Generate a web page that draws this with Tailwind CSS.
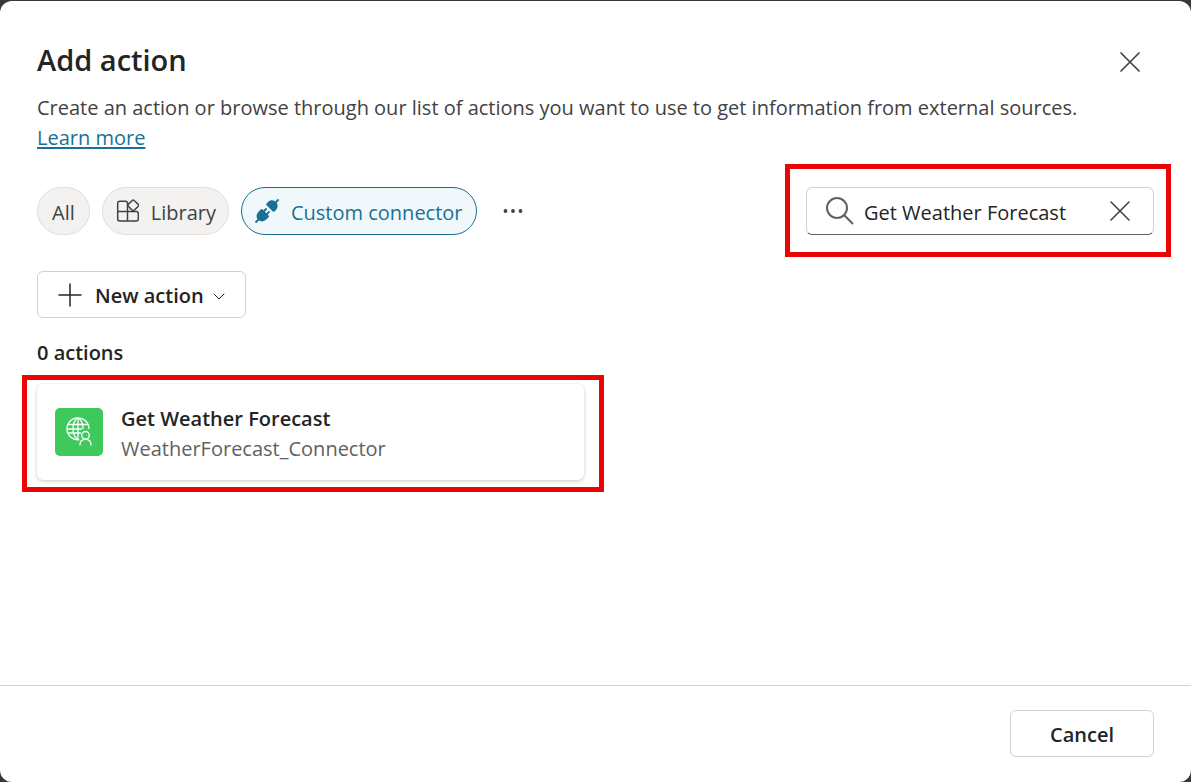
<!DOCTYPE html>
<html lang="en">
<head>
<meta charset="utf-8">
<meta name="viewport" content="width=device-width, initial-scale=1">
<title>Add action</title>
<script src="https://cdn.jsdelivr.net/npm/@tailwindcss/browser@4"></script>
</head>
<body class="bg-[#383838] pt-px font-['Segoe_UI','Open_Sans','Noto_Sans',sans-serif] text-[20px] leading-[30px] text-[#242424]">
<main role="dialog" aria-labelledby="title" class="flex min-h-[calc(100vh-1px)] flex-col rounded-xl bg-white">
  <div class="flex-1 px-[37px] pt-[39px]">
    <header class="flex items-start justify-between">
      <h1 id="title" class="text-[29px] leading-10 font-semibold">Add action</h1>
      <button type="button" aria-label="Close" class="-mb-1 grid h-11 w-12 place-items-center">
        <svg class="size-6" viewBox="0 0 24 24" fill="none" stroke="#424242" stroke-width="1.7" stroke-linecap="round"><path d="M3 3l18 18M21 3L3 21"/></svg>
      </button>
    </header>
    <p class="mt-[13px] text-[#424242]">Create an action or browse through our list of actions you want to use to get information from external sources.<br>
      <a href="#" class="text-[#1b6f93] underline decoration-2 underline-offset-2">Learn more</a></p>

    <div class="mt-[34px] flex items-center justify-between gap-6">
      <div class="flex items-center gap-3">
        <button type="button" class="flex h-12 items-center justify-center rounded-full border border-[#e1dfdd] bg-[#f3f2f1] px-3.5 text-[#424242]"><span class="pt-[3px]">All</span></button>
        <button type="button" class="flex h-12 items-center gap-3 rounded-full border border-[#e1dfdd] bg-[#f3f2f1] px-3 text-[#424242]">
          <svg class="size-6" viewBox="0 0 24 24" fill="none" stroke="#424242" stroke-width="1.5" stroke-linejoin="round"><path d="M12.500 12.500V4.200Q12.500 2.200 10.500 2.200H4.700Q2.700 2.200 2.700 4.200V20Q2.700 22 4.700 22H21.300Q23.300 22 23.300 20V14.500Q23.300 12.500 21.300 12.500H2.700M12.500 12.500V22"/><path fill="#f3f2f1" d="M17.300 1.500Q18.200.600 19.100 1.500L23.300 5.400Q24.100 6.300 23.300 7.200L19.100 11.200Q18.200 12 17.300 11.200L13.300 7.200Q12.500 6.300 13.300 5.400Z"/></svg>
          <span class="pt-[3px]">Library</span>
        </button>
        <button type="button" aria-pressed="true" class="flex h-12 items-center gap-3 rounded-full border border-[#1b6f93] bg-[#f0f8fc] px-[13px] text-[#1b6f93]">
          <svg class="size-6" viewBox="0 0 24 24" fill="#1b6f93"><path d="M22.300.300a1 1 0 0 1 1.400 1.400L21.600 3.800C23.200 6.200 22.900 9 20.900 11l-1.400 1.400a1.200 1.200 0 0 1-1.700 0L11.600 6.200a1.200 1.200 0 0 1 0-1.700L13 3.100C15 1.100 17.800.800 20.200 2.400Z"/><path d="M5.800 10.400 4 12.200C1.500 14.700.900 17.400 2.400 20.200L.300 22.300a1 1 0 0 0 1.400 1.400L3.800 21.600C6.600 23.100 9.300 22.500 11.800 20L13.600 18.200a1.200 1.200 0 0 0 0-1.700L12.700 15.600 14.700 13.600A1 1 0 0 0 13.300 12.200L11.300 14.200 9.800 12.700 11.800 10.700A1 1 0 0 0 10.400 9.300L8.400 11.300 7.500 10.400a1.200 1.200 0 0 0-1.700 0Z"/></svg>
          <span class="pt-[3px]">Custom connector</span>
        </button>
        <button type="button" aria-label="More filters" class="grid size-12 place-items-center">
          <svg class="size-6" viewBox="0 0 24 24" fill="#424242"><circle cx="4.500" cy="12" r="1.900"/><circle cx="12" cy="12" r="1.900"/><circle cx="19.500" cy="12" r="1.900"/></svg>
        </button>
      </div>
      <div class="relative w-[348px]">
        <div class="flex h-12 items-center rounded-md border border-[#d1d1d1] border-b-[#616161] pr-[21px] pl-[17px]">
          <svg class="size-8 shrink-0" viewBox="0 0 32 32" fill="none" stroke="#616161" stroke-width="2" stroke-linecap="round"><circle cx="13" cy="13" r="10"/><path d="M20.300 20.300L28.500 28.500"/></svg>
          <input type="text" aria-label="Search actions" value="Get Weather Forecast" class="ml-2 min-w-0 flex-1 bg-transparent pt-[3px] outline-none">
          <button type="button" aria-label="Clear search" class="grid size-6 shrink-0 place-items-center">
            <svg class="size-6" viewBox="0 0 24 24" fill="none" stroke="#424242" stroke-width="1.600" stroke-linecap="round"><path d="M3 3l18 18M21 3L3 21"/></svg>
          </button>
        </div>
        <div class="pointer-events-none absolute -top-[23px] -right-[17px] -bottom-[22px] -left-[21px] border-5 border-[#eb0505]"></div>
      </div>
    </div>

    <button type="button" class="mt-9 flex h-[47px] items-center rounded-md border border-[#d1d1d1] pr-[18px] pl-5 font-semibold">
      <svg class="size-6" viewBox="0 0 24 24" fill="none" stroke="#242424" stroke-width="1.500" stroke-linecap="round"><path d="M12 1v22M1 12h22"/></svg>
      <span class="ml-[13px] pt-[3px]">New action</span>
      <svg class="ml-[7px] mt-0.5 size-4" viewBox="0 0 16 16" fill="none" stroke="#242424" stroke-linecap="round" stroke-linejoin="round"><path d="M3 6L8 11 13 6"/></svg>
    </button>

    <h2 class="mt-5 font-semibold">0 actions</h2>
    <div class="mt-4 grid grid-cols-2 gap-[21px]">
      <div class="relative mr-px">
        <button type="button" class="flex h-24 w-full items-center gap-[18px] rounded-md bg-white px-[18px] text-left shadow-[0_0_2px_rgba(0,0,0,0.12),0_2px_4px_rgba(0,0,0,0.14)]">
          <svg class="size-12 shrink-0" viewBox="0 0 48 48" fill="none" stroke="#fff" stroke-width="1.300" stroke-linecap="round"><rect width="48" height="48" rx="5" fill="#3dc95c" stroke="none"/><path d="M24 31.800A11 11 0 1 1 34 20.500M22.500 31.500C19.500 29 18 25.500 18 21S19.500 12 23 9.800C26.500 12 28 16 28 20.500M13.500 16.500H32.500M13.500 25H25.500M12 21H26.500M23 9.800V31.500"/><circle cx="30.500" cy="27.300" r="3.800"/><path d="M25 37C25 33.500 27 31.300 30.500 31.300S36 33.500 36 37"/></svg>
          <span class="pt-1">
            <span class="block font-semibold">Get Weather Forecast</span>
            <span class="block text-[#616161]">WeatherForecast_Connector</span>
          </span>
        </button>
        <div class="pointer-events-none absolute -top-[9px] -right-5 -bottom-3 -left-[15px] border-5 border-[#eb0505]"></div>
      </div>
    </div>
  </div>
  <footer class="flex justify-end border-t border-[#d1d1d1] px-[37px] pt-6 pb-[25px]">
    <button type="button" class="h-[47px] w-36 rounded-md border border-[#d1d1d1] pt-[3px] font-semibold">Cancel</button>
  </footer>
</main>
</body>
</html>
